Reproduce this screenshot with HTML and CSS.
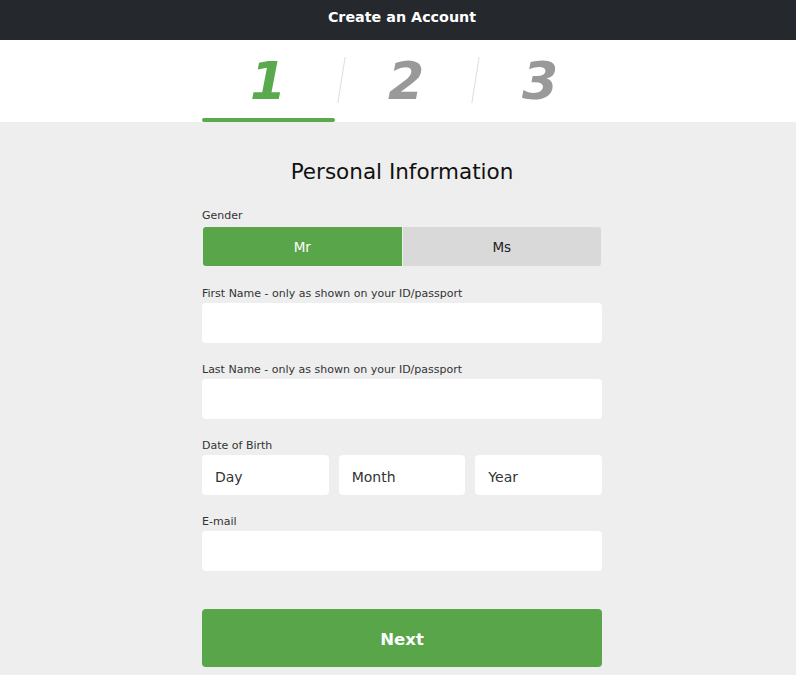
FILE: index.html
```html
<!DOCTYPE html>
<html lang="en">
<head>
<meta charset="utf-8">
<title>Create an Account</title>
<link rel="stylesheet" href="styles.css">
</head>
<body>
<header class="topbar">Create an Account</header>
<nav class="steps">
  <div class="steps-inner">
    <div class="step active">1</div>
    <div class="sep"></div>
    <div class="step later">2</div>
    <div class="sep"></div>
    <div class="step later">3</div>
  </div>
</nav>
<main class="content">
  <form class="form">
    <h1 class="title">Personal Information</h1>
    <div class="field gender-field">
      <label class="label">Gender</label>
      <div class="toggle">
        <button type="button" class="opt on">Mr</button>
        <button type="button" class="opt">Ms</button>
      </div>
    </div>
    <div class="field">
      <label class="label">First Name - only as shown on your ID/passport</label>
      <input class="input" type="text">
    </div>
    <div class="field">
      <label class="label">Last Name - only as shown on your ID/passport</label>
      <input class="input" type="text">
    </div>
    <div class="field">
      <label class="label">Date of Birth</label>
      <div class="dob">
        <input class="input" type="text" placeholder="Day">
        <input class="input" type="text" placeholder="Month">
        <input class="input" type="text" placeholder="Year">
      </div>
    </div>
    <div class="field">
      <label class="label">E-mail</label>
      <input class="input" type="email">
    </div>
    <button type="button" class="next">Next</button>
  </form>
</main>
</body>
</html>
```

FILE: styles.css
```css
* { box-sizing: border-box; }
html, body { margin: 0; padding: 0; }
body {
  background: #eeeeee;
  font-family: "DejaVu Sans", Verdana, sans-serif;
  color: #222;
  width: 796px;
  height: 675px;
  overflow: hidden;
}
.topbar {
  height: 40px;
  background: #25282d;
  color: #fff;
  font-weight: bold;
  font-size: 14.3px;
  display: flex;
  align-items: center;
  justify-content: center;
  padding-left: 8px;
  padding-bottom: 6px;
}
.steps {
  background: #fff;
  height: 82px;
  padding-left: 8px;
}
.steps-inner {
  width: 401px;
  margin: 0 auto;
  display: flex;
  align-items: flex-start;
  height: 100%;
}
.step {
  width: 133px;
  height: 82px;
  display: flex;
  align-items: center;
  justify-content: center;
  font-size: 52px;
  font-weight: bold;
  font-style: italic;
  color: #999999;
  position: relative;
}
.step.later { padding-left: 8px; }
.step.active { color: #5aa94c; }
.step.active::after {
  content: "";
  position: absolute;
  left: 0;
  right: 0;
  bottom: 0;
  height: 4px;
  border-radius: 2px;
  background: #5aa94c;
}
.sep {
  width: 1px;
  height: 46px;
  margin-top: 17px;
  background: #dddddd;
  transform: translateX(6px) skewX(-9deg);
}
.content {
  display: flex;
  justify-content: center;
  padding-left: 8px;
}
.form {
  width: 400px;
  display: flex;
  flex-direction: column;
}
.title {
  margin: 35px 0 21px;
  font-size: 21.5px;
  line-height: 30px;
  font-weight: normal;
  text-align: center;
  color: #111;
}
.field {
  display: flex;
  flex-direction: column;
  margin-bottom: 19px;
}
.label {
  font-size: 11px;
  line-height: 16px;
  color: #333;
  margin-bottom: 1px;
}
.gender-field { margin-bottom: 20px; }
.gender-field .label { margin-bottom: 3px; }
.toggle {
  display: flex;
  height: 39px;
  margin: 0 1px;
  border-radius: 3px;
  overflow: hidden;
}
.opt {
  flex: 1;
  border: none;
  margin: 0;
  padding-top: 1px;
  font-family: inherit;
  font-size: 13.5px;
  background: #d9d9d9;
  color: #222;
}
.opt.on {
  background: #59a549;
  color: #fff;
  border-right: 1px solid #e8f2e5;
}
.input {
  height: 40px;
  width: 100%;
  border: none;
  border-radius: 4px;
  background: #fff;
  font-family: inherit;
  font-size: 14px;
  padding: 3px 12px 0 13px;
  color: #333;
}
.input::placeholder { color: #333; opacity: 1; }
.dob {
  display: flex;
  gap: 10px;
}
.dob .input { flex: 1; min-width: 0; }
.next {
  margin-top: 19px;
  height: 58px;
  width: 100%;
  border: none;
  border-radius: 4px;
  background: #59a549;
  color: #fff;
  font-family: inherit;
  font-weight: bold;
  font-size: 16.5px;
  padding-top: 3px;
}
```
